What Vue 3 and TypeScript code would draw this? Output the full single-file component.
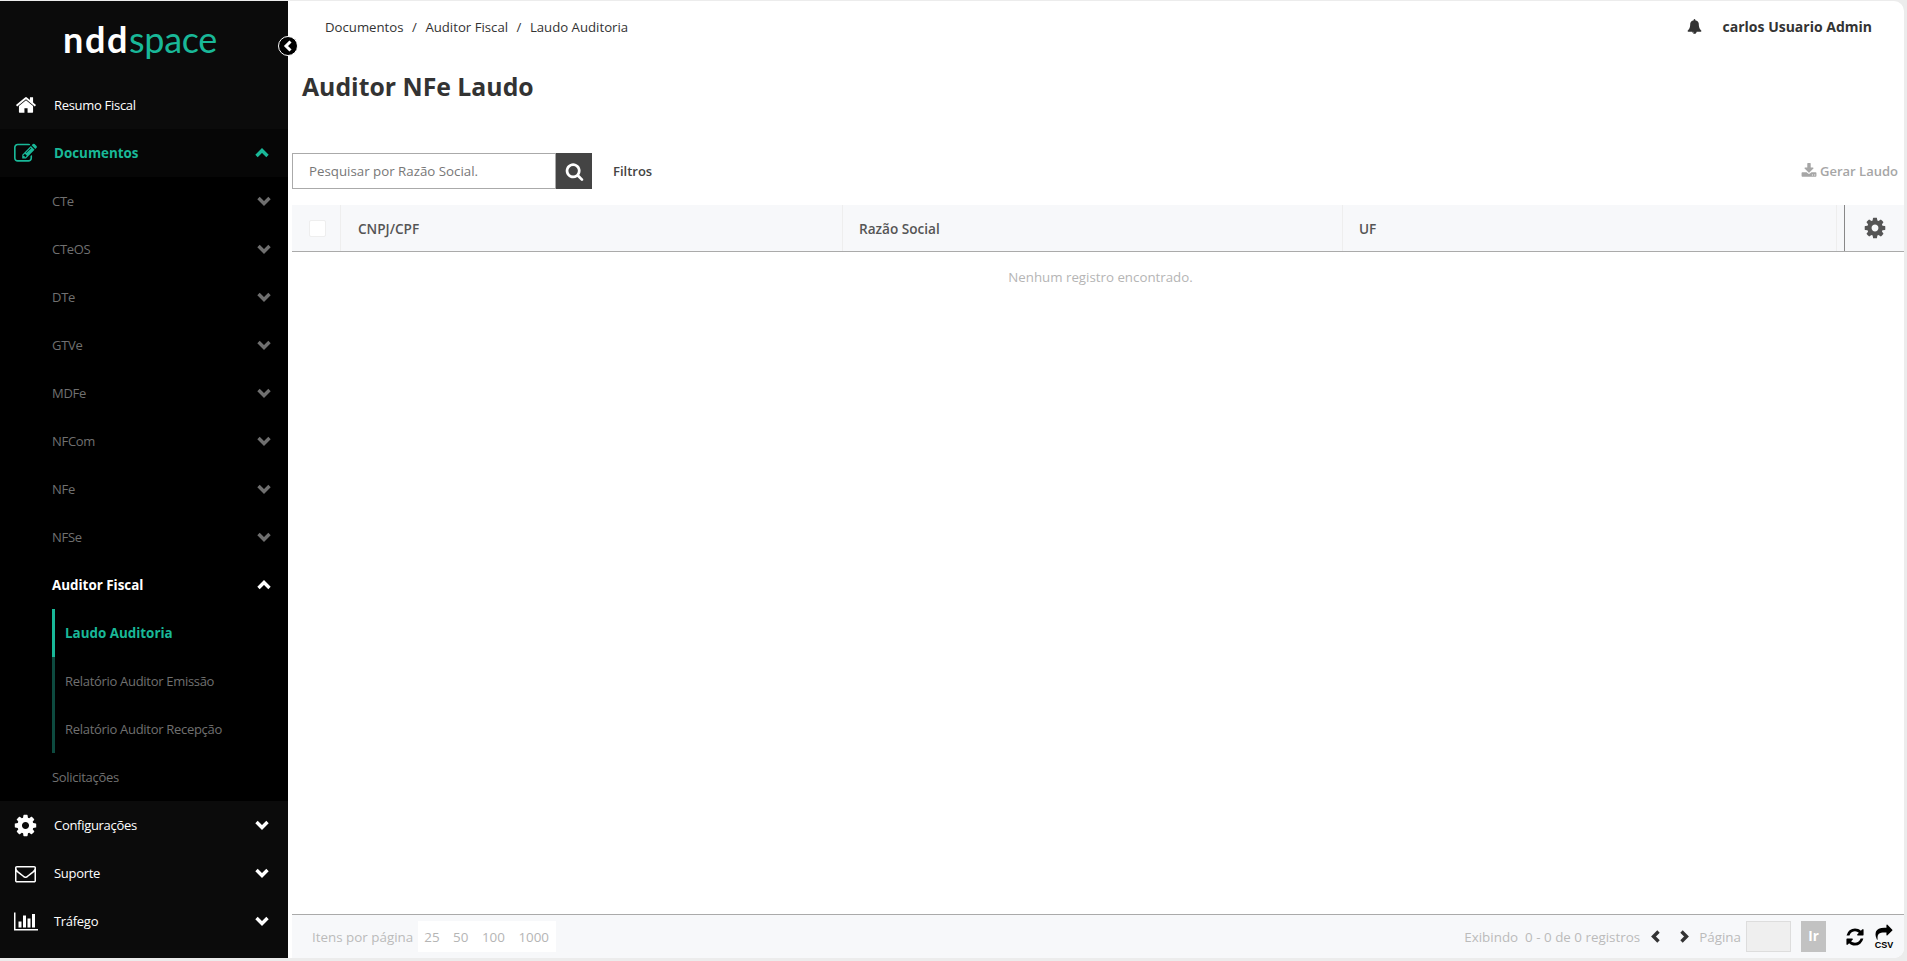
<script setup lang="ts">
const rows = ['CTe', 'CTeOS', 'DTe', 'GTVe', 'MDFe', 'NFCom', 'NFe', 'NFSe']
const auditor = ['Laudo Auditoria', 'Relatório Auditor Emissão', 'Relatório Auditor Recepção']
const sizes = [25, 50, 100, 1000]

const cog = 'M1152 896q0-106-75-181t-181-75-181 75-75 181 75 181 181 75 181-75 75-181zm512-109v222q0 12-8 23t-20 13l-185 28q-19 54-39 91 35 50 107 138 10 12 10 25t-9 23q-27 37-99 108t-94 71q-12 0-26-9l-138-108q-44 23-91 38-16 136-29 186-7 28-36 28h-222q-14 0-24.5-8.5t-11.5-21.5l-28-184q-49-16-90-37l-141 107q-10 9-25 9-14 0-25-11-126-114-165-168-7-10-7-23 0-12 8-23 15-21 51-66.5t54-70.5q-27-50-41-99l-183-27q-13-2-21-12.5t-8-23.5v-222q0-12 8-23t19-13l186-28q14-46 39-92-40-57-107-138-10-12-10-24 0-10 9-23 26-36 98.5-107.5t94.5-71.5q13 0 26 10l138 107q44-23 91-38 16-136 29-186 7-28 36-28h222q14 0 24.5 8.5t11.5 21.5l28 184q49 16 90 37l142-107q9-9 24-9 13 0 25 10 129 119 165 170 7 8 7 22 0 12-8 23-15 21-51 66.5t-54 70.5q26 50 41 98l183 28q13 2 21 12.5t8 23.5z'
</script>

<template>
  <div class="shell">
    <aside class="sidebar">
      <div class="logo"><span class="logo-a">ndd</span><span class="logo-b">space</span></div>
      <div class="collapse">
        <svg width="10" height="12" viewBox="0 0 10 12"><polyline points="7.5,1.5 3,6 7.5,10.5" fill="none" stroke="#fff" stroke-width="3" /></svg>
      </div>

      <div class="item top">
        <div class="slot">
          <svg width="22" height="22" viewBox="0 0 1792 1792"><path fill="#fff" d="M1472 992v480q0 26-19 45t-45 19h-384v-384h-256v384h-384q-26 0-45-19t-19-45v-480q0-1 .5-3t.5-3l575-474 575 474q1 2 1 6zm223-69l-62 74q-8 9-21 11h-3q-13 0-21-7l-692-577-692 577q-12 8-24 7-13-2-21-11l-62-74q-8-10-7-23.5t11-21.5l719-599q32-26 76-26t76 26l244 204v-195q0-14 9-23t23-9h192q14 0 23 9t9 23v408l219 182q10 8 11 21.5t-7 23.5z" /></svg>
        </div>
        <span>Resumo Fiscal</span>
      </div>

      <div class="docs">
        <div class="item top active">
          <div class="slot">
            <svg width="23" height="23" viewBox="0 0 1792 1792"><path fill="#19b898" d="M888 1184l116-116-152-152-116 116v56h96v96h56zm440-720q-16-16-33 1l-350 350q-17 17-1 33t33-1l350-350q17-17 1-33zm80 594v190q0 119-84.5 203.5t-203.5 84.5h-832q-119 0-203.5-84.5t-84.5-203.5v-832q0-119 84.5-203.5t203.5-84.5h832q63 0 117 25 15 7 18 23 3 17-9 29l-49 49q-14 14-32 8-23-6-45-6h-832q-66 0-113 47t-47 113v832q0 66 47 113t113 47h832q66 0 113-47t47-113v-126q0-13 9-22l64-64q15-15 35-7t20 29zm-96-738l288 288-672 672h-288v-288zm444 132l-92 92-288-288 92-92q28-28 68-28t68 28l152 152q28 28 28 68t-28 68z" /></svg>
          </div>
          <span>Documentos</span>
          <svg class="chev" width="14" height="10" viewBox="0 0 14 10"><polyline points="1.5,8 7,2.5 12.5,8" fill="none" stroke="#19b898" stroke-width="3.4" /></svg>
        </div>

        <div v-for="r in rows" :key="r" class="item sub">
          <span>{{ r }}</span>
          <svg class="chev" width="14" height="10" viewBox="0 0 14 10"><polyline points="1.5,2 7,7.5 12.5,2" fill="none" stroke="#6f6f6f" stroke-width="3.4" /></svg>
        </div>

        <div class="item sub open">
          <span>Auditor Fiscal</span>
          <svg class="chev" width="14" height="10" viewBox="0 0 14 10"><polyline points="1.5,8 7,2.5 12.5,8" fill="none" stroke="#fff" stroke-width="3.4" /></svg>
        </div>
        <div class="tree">
          <div v-for="(a, i) in auditor" :key="a" class="leaf" :class="{ on: i === 0 }">{{ a }}</div>
        </div>
        <div class="item sub"><span>Solicitações</span></div>
      </div>

      <div class="item top">
        <div class="slot">
          <svg width="25" height="25" viewBox="0 0 1792 1792"><path fill="#fff" :d="cog" /></svg>
        </div>
        <span>Configurações</span>
        <svg class="chev" width="14" height="10" viewBox="0 0 14 10"><polyline points="1.5,2 7,7.5 12.5,2" fill="none" stroke="#fff" stroke-width="3.4" /></svg>
      </div>
      <div class="item top">
        <div class="slot">
          <svg width="21" height="21" viewBox="0 0 1792 1792"><path fill="#fff" d="M1664 1504v-768q-32 36-69 66-268 206-426 338-51 43-83 67t-86.5 48.5-102.5 24.5h-2q-48 0-102.5-24.5t-86.5-48.5-83-67q-158-132-426-338-37-30-69-66v768q0 13 9.5 22.5t22.5 9.5h1472q13 0 22.5-9.5t9.5-22.5zm0-1051v-24.5l-.5-13-3-12.5-5.5-9-9-7.5-14-2.5h-1472q-13 0-22.5 9.5t-9.5 22.5q0 168 147 284 193 152 401 317 6 5 35 29.5t46 37.5 44.5 31.5 50.5 27.5 43 9h2q20 0 43-9t50.5-27.5 44.5-31.5 46-37.5 35-29.5q208-165 401-317 54-43 100.5-115.5t46.5-131.5zm128-37v1088q0 66-47 113t-113 47h-1472q-66 0-113-47t-47-113v-1088q0-66 47-113t113-47h1472q66 0 113 47t47 113z" /></svg>
        </div>
        <span>Suporte</span>
        <svg class="chev" width="14" height="10" viewBox="0 0 14 10"><polyline points="1.5,2 7,7.5 12.5,2" fill="none" stroke="#fff" stroke-width="3.4" /></svg>
      </div>
      <div class="item top">
        <div class="slot">
          <svg width="24" height="21" viewBox="0 0 2048 1792"><path fill="#fff" d="M640 896v512h-256v-512h256zm384-512v1024h-256v-1024h256zm1024 1152v128h-2048v-1536h128v1408h1920zm-640-896v768h-256v-768h256zm384-384v1152h-256v-1152h256z" /></svg>
        </div>
        <span>Tráfego</span>
        <svg class="chev" width="14" height="10" viewBox="0 0 14 10"><polyline points="1.5,2 7,7.5 12.5,2" fill="none" stroke="#fff" stroke-width="3.4" /></svg>
      </div>
    </aside>

    <main class="main">
      <header class="topbar">
        <div class="crumbs">
          <span>Documentos</span><i>/</i><span>Auditor Fiscal</span><i>/</i><span>Laudo Auditoria</span>
        </div>
        <div class="user">
          <svg width="15" height="15" viewBox="0 0 1792 1792"><path fill="#333" d="M912 1696q0-16-16-16-59 0-101.5-42.5t-42.5-101.5q0-16-16-16t-16 16q0 73 51.5 124.5t124.5 51.5q16 0 16-16zm816-288q0 52-38 90t-90 38h-448q0 106-75 181t-181 75-181-75-75-181h-448q-52 0-90-38t-38-90q50-42 91-88t85-119.5 74.5-158.5 50-206 19.5-260q0-152 117-282.5t307-158.5q-8-19-8-39 0-40 28-68t68-28 68 28 28 68q0 20-8 39 190 28 307 158.5t117 282.5q0 139 19.5 260t50 206 74.5 158.5 85 119.5 91 88z" /></svg>
          <b>carlos Usuario Admin</b>
        </div>
      </header>

      <h1 class="title">Auditor NFe Laudo</h1>

      <div class="toolbar">
        <div class="search">
          <div class="field">Pesquisar por Razão Social.</div>
          <button type="button" class="go">
            <svg width="19" height="19" viewBox="0 0 1792 1792"><path fill="#fff" d="M1216 832q0-185-131.5-316.5t-316.5-131.5-316.5 131.5-131.5 316.5 131.5 316.5 316.5 131.5 316.5-131.5 131.5-316.5zm512 832q0 52-38 90t-90 38q-54 0-90-38l-343-342q-179 124-399 124-143 0-273.5-55.5t-225-150-150-225-55.5-273.5 55.5-273.5 150-225 225-150 273.5-55.5 273.5 55.5 225 150 150 225 55.5 273.5q0 220-124 399l343 343q37 37 37 90z" /></svg>
          </button>
        </div>
        <span class="filters">Filtros</span>
        <span class="report">
          <svg width="16" height="16" viewBox="0 0 1792 1792"><path fill="#a6a6a6" d="M1344 1344q0-26-19-45t-45-19-45 19-19 45 19 45 45 19 45-19 19-45zm256 0q0-26-19-45t-45-19-45 19-19 45 19 45 45 19 45-19 19-45zm128-224v320q0 40-28 68t-68 28h-1472q-40 0-68-28t-28-68v-320q0-40 28-68t68-28h465l135 136q58 56 136 56t136-56l136-136h464q40 0 68 28t28 68zm-325-569q17 41-14 70l-448 448q-18 19-45 19t-45-19l-448-448q-31-29-14-70 17-39 59-39h256v-448q0-26 19-45t45-19h256q26 0 45 19t19 45v448h256q42 0 59 39z" /></svg>
          Gerar Laudo
        </span>
      </div>

      <div class="thead">
        <div class="cell check"><span class="box"></span></div>
        <div class="cell">CNPJ/CPF</div>
        <div class="cell">Razão Social</div>
        <div class="cell">UF</div>
        <div class="cell gap"></div>
        <div class="cell gear">
          <svg width="24" height="24" viewBox="0 0 1792 1792"><path fill="#555" :d="cog" /></svg>
        </div>
      </div>
      <div class="empty">Nenhum registro encontrado.</div>

      <footer class="foot">
        <span class="muted">Itens por página</span>
        <div class="sizes"><span v-for="s in sizes" :key="s">{{ s }}</span></div>
        <div class="pager">
          <span class="muted">Exibindo&nbsp; 0 - 0 de 0 registros</span>
          <svg class="arrow" width="11" height="13" viewBox="0 0 11 13"><polyline points="8.5,1.5 3.5,6.5 8.5,11.5" fill="none" stroke="#333" stroke-width="3.4" /></svg>
          <svg class="arrow next" width="11" height="13" viewBox="0 0 11 13"><polyline points="2.5,1.5 7.5,6.5 2.5,11.5" fill="none" stroke="#333" stroke-width="3.4" /></svg>
          <span class="muted">Página</span>
          <div class="page-input"></div>
          <div class="ir">Ir</div>
          <svg class="refresh" width="20" height="20" viewBox="0 0 1792 1792"><path fill="#000" d="M1639 1056q0 5-1 7-64 268-268 434.5t-478 166.5q-146 0-282.5-55t-243.5-157l-129 129q-19 19-45 19t-45-19-19-45v-448q0-26 19-45t45-19h448q26 0 45 19t19 45-19 45l-137 137q71 66 161 102t187 36q134 0 250-65t186-179q11-17 53-117 8-23 30-23h192q13 0 22.5 9.5t9.5 22.5zm25-800v448q0 26-19 45t-45 19h-448q-26 0-45-19t-19-45 19-45l138-138q-148-137-349-137-134 0-250 65t-186 179q-11 17-53 117-8 23-30 23h-199q-13 0-22.5-9.5t-9.5-22.5v-7q65-268 270-434.5t480-166.5q146 0 284 55.5t245 156.5l130-129q19-19 45-19t45 19 19 45z" /></svg>
          <div class="csv">
            <svg width="20" height="17" viewBox="0 0 1792 1792"><path fill="#000" d="M1792 640q0 26-19 45l-512 512q-19 19-45 19t-45-19-19-45v-256h-224q-98 0-175.5 6t-154 21.5-133 42.5-105.5 69.5-80 101-48.5 138.5-17.5 181q0 55 5 123 0 6 2.5 23.5t2.5 26.5q0 15-8.5 25t-23.5 10q-16 0-28-17-7-9-13-22t-13.5-30-10.5-24q-127-285-127-451 0-199 53-333 162-403 875-403h224v-256q0-26 19-45t45-19 45 19l512 512q19 19 19 45z" /></svg>
            <span>CSV</span>
          </div>
        </div>
      </footer>
    </main>
  </div>
</template>

<style>
html, body {
  margin: 0;
  overflow: hidden;
  background: #ececec;
}
</style>

<style scoped>
.shell {
  display: flex;
  height: 957px;
  padding: 1px 3px 3px 0;
  font-family: "Open Sans", "Noto Sans", sans-serif;
  color: #333;
}

.sidebar {
  position: relative;
  flex: 0 0 288px;
  background: #0b0b0b;
  font-family: "Open Sans", "Noto Sans", sans-serif;
  font-size: 13px;
  letter-spacing: -0.3px;
}
.logo {
  height: 80px;
  box-sizing: border-box;
  padding: 14px 0 0 63px;
  font-family: Lato, sans-serif;
  font-size: 36px;
  line-height: 48px;
}
.logo-a { color: #fff; font-weight: 700; letter-spacing: 1.6px; }
.logo-b { color: #19b898; font-weight: 400; letter-spacing: -0.3px; }
.collapse {
  position: absolute;
  top: 35px;
  right: -10px;
  width: 18px;
  height: 18px;
  border: 1px solid #fff;
  border-radius: 50%;
  background: #000;
  display: flex;
  align-items: center;
  justify-content: center;
  z-index: 2;
}

.item {
  display: flex;
  align-items: center;
  height: 48px;
}
.item.top {
  color: #fff;
  padding-right: 19px;
}
.slot {
  flex: 0 0 51px;
  margin-right: 3px;
  display: flex;
  justify-content: center;
}
.chev { margin-left: auto; }
.item.active,
.item.open,
.leaf.on {
  font-size: 13.4px;
  font-weight: 700;
  letter-spacing: 0;
}
.item.active {
  color: #19b898;
  background: #060606;
}
.docs { background: #000; }
.item.sub {
  padding: 0 17px 0 52px;
  color: #707070;
}
.item.open { color: #fff; }
.tree {
  margin-left: 52px;
  border-left: 3px solid #0d4a3f;
}
.leaf {
  display: flex;
  align-items: center;
  height: 48px;
  padding-left: 10px;
  color: #707070;
  margin-left: -3px;
  border-left: 3px solid transparent;
}
.leaf.on {
  color: #19b898;
  border-left-color: #19b898;
}

.main {
  flex: 1;
  display: flex;
  flex-direction: column;
  min-width: 0;
  background: #fff;
  border-radius: 0 10px 10px 0;
  overflow: hidden;
  padding-left: 4px;
}

.topbar {
  display: flex;
  align-items: center;
  justify-content: space-between;
  box-sizing: border-box;
  height: 52px;
  padding: 0 32px 1px 33px;
  font-size: 13.2px;
}
.crumbs i {
  font-style: normal;
  margin: 0 8.5px;
}
.user {
  display: flex;
  align-items: center;
  gap: 21px;
  font-size: 14px;
}
.user b { font-weight: 700; }

.title {
  margin: 15px 0 0;
  padding-left: 10px;
  font-size: 24.8px;
  line-height: 36px;
  font-weight: 700;
  color: #333;
}

.toolbar {
  display: flex;
  align-items: center;
  height: 36px;
  margin-top: 49px;
  font-size: 13px;
}
.search { display: flex; height: 36px; }
.field {
  width: 264px;
  box-sizing: border-box;
  border: 1px solid #aaa;
  padding-left: 16px;
  line-height: 35px;
  font-size: 13.3px;
  color: #777;
}
.go {
  width: 36px;
  padding: 0;
  border: none;
  background: #444;
  display: flex;
  align-items: center;
  justify-content: center;
}
.filters {
  margin-left: 21px;
  font-weight: 600;
  color: #444;
}
.report {
  margin-left: auto;
  padding-right: 6px;
  display: flex;
  align-items: center;
  gap: 3px;
  font-weight: 600;
  color: #a6a6a6;
}

.thead {
  display: grid;
  grid-template-columns: 49px 502px 500px 1fr 7px 60px;
  height: 46px;
  margin-top: 16px;
  background: #f7f8fa;
  border-bottom: 1px solid #aaa;
  font-size: 13.6px;
  font-weight: 600;
  color: #555;
}
.cell {
  display: flex;
  align-items: center;
  padding: 1px 0 0 16px;
  border-right: 1px solid #eee;
}
.cell:nth-child(2) { padding-left: 17px; }
.cell.check { padding-left: 17px; }
.cell.gap { padding: 0; border-right: none; }
.box {
  width: 15px;
  height: 15px;
  background: #fff;
  border: 1px solid #eee;
  border-radius: 2px;
}
.cell.gear {
  padding: 0;
  justify-content: center;
  border-right: none;
  border-left: 1px solid #888;
}
.empty {
  flex: 1;
  text-align: center;
  padding: 15px 0 0 5px;
  font-size: 13.3px;
  line-height: 20px;
  color: #b5b5b5;
}

.foot {
  display: flex;
  align-items: center;
  height: 43px;
  border-top: 1px solid #aaa;
  background: #f7f8fa;
  padding-left: 20px;
  font-size: 13.4px;
}
.muted { color: #bbb; }
.sizes {
  display: flex;
  gap: 13.5px;
  margin-left: 5px;
  padding: 0 7px 0 6px;
  height: 31px;
  align-items: center;
  background: #fff;
  color: #b5b5b5;
}
.pager {
  margin-left: auto;
  display: flex;
  align-items: center;
  padding-right: 10px;
}
.arrow { margin-left: 10px; }
.arrow.next { margin: 0 9px 0 18px; }
.page-input {
  width: 43px;
  height: 29px;
  margin-left: 5px;
  background: #efefef;
  border: 1px solid #ddd;
}
.ir {
  width: 25px;
  height: 31px;
  margin-left: 10px;
  background: #c2c2c2;
  color: #fff;
  font-weight: 700;
  text-align: center;
  line-height: 31px;
}
.refresh { margin-left: 19px; }
.csv {
  margin-left: 9px;
  display: flex;
  flex-direction: column;
  align-items: center;
  font-family: "Liberation Sans", sans-serif;
  font-size: 9px;
  font-weight: 700;
  line-height: 9px;
  color: #000;
}
</style>
